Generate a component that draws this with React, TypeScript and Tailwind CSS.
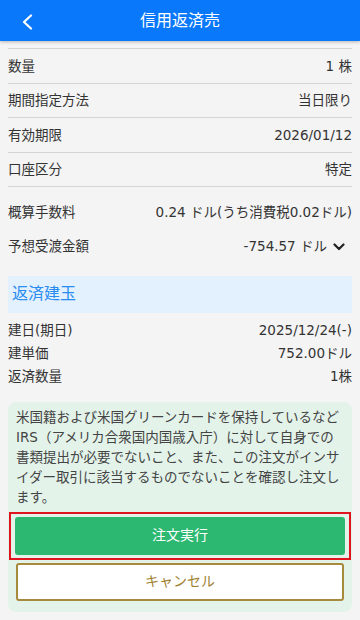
const font = { fontFamily: '"DejaVu Sans", "Noto Sans CJK JP", sans-serif' }

function Row({ label, value }: { label: string; value: string }) {
  return (
    <div className="flex items-center justify-between h-[34.5px] border-b border-[#d4d4d6]">
      <span className="text-[13.5px] text-[#333]">{label}</span>
      <span className="text-[13.5px] text-[#333]">{value}</span>
    </div>
  )
}

function SubRow({ label, value }: { label: string; value: string }) {
  return (
    <div className="flex justify-between h-[23px] items-center text-[13.5px] text-[#333]">
      <span>{label}</span>
      <span>{value}</span>
    </div>
  )
}

export default function App() {
  return (
    <div className="w-[360px] h-[620px] bg-[#f4f4f4] overflow-hidden" style={font}>
      {/* Header */}
      <div className="relative h-[41px] bg-[#0a78fa] flex items-center justify-center shadow-[0_1px_3px_rgba(0,0,0,0.25)]">
        <svg className="absolute left-[21px] top-[14px]" width="12" height="16" viewBox="0 0 12 16" fill="none">
          <path d="M10 1.5 L3 8 L10 14.5" stroke="white" strokeWidth="2.2" strokeLinecap="round" strokeLinejoin="round" />
        </svg>
        <span className="text-white text-[16px]">信用返済売</span>
      </div>

      <div className="px-2">
        <div className="h-[8px] border-b border-[#d4d4d6]" />
        <Row label="数量" value="1 株" />
        <Row label="期間指定方法" value="当日限り" />
        <Row label="有効期限" value="2026/01/12" />
        <Row label="口座区分" value="特定" />
        <div className="flex items-center justify-between h-[34px] mt-[8.5px]">
          <span className="text-[13.5px] text-[#333]">概算手数料</span>
          <span className="text-[13.5px] text-[#333]">0.24 ドル(うち消費税0.02ドル)</span>
        </div>
        <div className="flex items-center justify-between h-[34px]">
          <span className="text-[13.5px] text-[#333]">予想受渡金額</span>
          <span className="flex items-center text-[13.5px] text-[#333] pr-[7px]">
            -754.57 ドル
            <svg className="ml-[6px]" width="12" height="8" viewBox="0 0 12 8" fill="none">
              <path d="M1.5 1.5 L6 6 L10.5 1.5" stroke="#222" strokeWidth="2.2" strokeLinecap="round" strokeLinejoin="round" />
            </svg>
          </span>
        </div>

        {/* 返済建玉 */}
        <div className="mt-[12px] h-[37px] bg-[#e2f1fd] flex items-center px-[4px]">
          <span className="text-[16px] text-[#2a8cf0]">返済建玉</span>
        </div>
        <div className="pt-[6.5px]">
          <SubRow label="建日(期日)" value="2025/12/24(-)" />
          <SubRow label="建単価" value="752.00ドル" />
          <SubRow label="返済数量" value="1株" />
        </div>

        {/* Confirm box */}
        <div className="mt-[13.5px] bg-[#e3f3ea] rounded-[8px] pt-[5px] pb-[11px]">
          <p className="pl-[8px] pr-[6px] text-[13.5px] leading-[20px] text-[#444]">
            米国籍および米国グリーンカードを保持しているなどIRS（アメリカ合衆国内国歳入庁）に対して自身での書類提出が必要でないこと、また、この注文がインサイダー取引に該当するものでないことを確認し注文します。
          </p>
          <div className="mx-[1px] mt-[5px] border-2 border-[#e0141e] px-[4px] py-[3px]">
            <button className="w-full h-[38px] bg-[#2db872] rounded-[3px] text-white text-[14px]">注文実行</button>
          </div>
          <div className="px-[8px] mt-[3px]">
            <button className="w-full h-[38px] bg-white border-2 border-[#a88a3c] rounded-[3px] text-[#a08232] text-[14px]">キャンセル</button>
          </div>
        </div>
      </div>
    </div>
  )
}
